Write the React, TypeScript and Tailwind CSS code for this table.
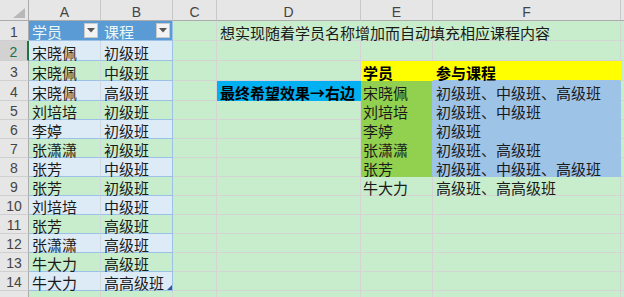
import React from "react";

const COLS = ["A", "B", "C", "D", "E", "F", ""];
const COL_W = [
  "w-[72px]",
  "w-[72px]",
  "w-[44px]",
  "w-[144px]",
  "w-[72px]",
  "w-[188px]",
  "w-[30px]",
];

const TABLE = [
  ["宋晓佩", "初级班"],
  ["宋晓佩", "中级班"],
  ["宋晓佩", "高级班"],
  ["刘培培", "初级班"],
  ["李婷", "初级班"],
  ["张潇潇", "初级班"],
  ["张芳", "中级班"],
  ["张芳", "初级班"],
  ["刘培培", "中级班"],
  ["张芳", "高级班"],
  ["张潇潇", "高级班"],
  ["牛大力", "高级班"],
  ["牛大力", "高高级班"],
];

const RESULT: Record<number, [string, string]> = {
  4: ["宋晓佩", "初级班、中级班、高级班"],
  5: ["刘培培", "初级班、中级班"],
  6: ["李婷", "初级班"],
  7: ["张潇潇", "初级班、高级班"],
  8: ["张芳", "初级班、中级班、高级班"],
  9: ["牛大力", "高级班、高高级班"],
};

const CJK = "font-['Noto_Sans_CJK_SC','Noto_Sans',sans-serif]";

function Dropdown() {
  return (
    <div className="absolute right-[2px] top-[2px] w-[14px] h-[15px] bg-[#f3f3f3] border border-[#c9c9c9] flex items-center justify-center">
      <svg width="8" height="5" viewBox="0 0 8 5">
        <path d="M0 0H8L4 4.5Z" fill="#555" />
      </svg>
    </div>
  );
}

function Cell({
  w,
  cls,
  children,
}: {
  w: string;
  cls: string;
  children?: React.ReactNode;
}) {
  return (
    <div
      className={`${w} relative shrink-0 h-full border-r border-b flex items-end whitespace-nowrap text-[15px] leading-none text-[#1a1a1a] ${CJK} ${cls}`}
    >
      {children}
    </div>
  );
}

function RowHead({ n }: { n: number }) {
  const active = n === 2;
  return (
    <div
      className={`w-[29px] shrink-0 h-full border-b border-[#cfcfcf] flex items-end justify-center pb-[1px] text-[14px] leading-none font-['Liberation_Sans',Arial,sans-serif] ${
        active
          ? "bg-[#d2d2d2] text-[#217346] border-r-2 border-r-[#217346]"
          : "bg-[#e6e6e6] text-[#444] border-r border-r-[#ababab]"
      }`}
    >
      {n <= 14 ? n : ""}
    </div>
  );
}

function Row({ r }: { r: number }) {
  const h = r <= 4 ? "h-[20px]" : "h-[19px]";
  const grid = "border-[#d4d4d4]";
  const data = r >= 2 && r <= 14 ? TABLE[r - 2] : null;
  const band = r % 2 === 0 ? "bg-[#ddebf7]" : "";
  const res = RESULT[r];

  let a: React.ReactNode;
  let b: React.ReactNode;
  if (r === 1) {
    a = (
      <Cell w={COL_W[0]} cls="bg-[#5b9bd5] border-[#5b9bd5] border-b-[#9bc2e6] text-[#eaf7f2] pl-[3px] pb-[1px]">
        学员
        <Dropdown />
      </Cell>
    );
    b = (
      <Cell w={COL_W[1]} cls="bg-[#5b9bd5] border-[#9bc2e6] text-[#eaf7f2] pl-[3px] pb-[1px]">
        课程
        <Dropdown />
      </Cell>
    );
  } else if (data) {
    a = (
      <Cell w={COL_W[0]} cls={`${band} border-r-[#d0d8e0] border-b-[#9bc2e6] pl-[3px]`}>
        {data[0]}
      </Cell>
    );
    b = (
      <Cell w={COL_W[1]} cls={`${band} border-[#9bc2e6] pl-[3px]`}>
        {data[1]}
        {r === 14 && (
          <svg className="absolute right-[0px] bottom-[0px]" width="5" height="5" viewBox="0 0 5 5">
            <path d="M5 0V5H0Z" fill="#2f5597" />
          </svg>
        )}
      </Cell>
    );
  } else {
    a = <Cell w={COL_W[0]} cls={grid} />;
    b = <Cell w={COL_W[1]} cls={grid} />;
  }

  let d: React.ReactNode = <Cell w={COL_W[3]} cls={grid} />;
  if (r === 1) {
    d = (
      <Cell w={COL_W[3]} cls="border-b-[#d4d4d4] border-r-transparent pl-[3px] z-10">
        想实现随着学员名称增加而自动填充相应课程内容
      </Cell>
    );
  } else if (r === 4) {
    d = (
      <Cell w={COL_W[3]} cls="bg-[#00b0f0] border-[#00b0f0] font-bold text-black pl-[3px]">
        最终希望效果→右边
      </Cell>
    );
  }

  let e: React.ReactNode = (
    <Cell w={COL_W[4]} cls={r === 1 ? "border-b-[#d4d4d4] border-r-transparent" : grid} />
  );
  let f: React.ReactNode = <Cell w={COL_W[5]} cls={grid} />;
  if (r === 3) {
    e = (
      <Cell w={COL_W[4]} cls="bg-[#ffff00] border-[#ffff00] font-bold text-black pl-[2px]">
        学员
      </Cell>
    );
    f = (
      <Cell w={COL_W[5]} cls="bg-[#ffff00] border-[#ffff00] border-b-[#9dc3e6] font-bold text-black pl-[3px]">
        参与课程
      </Cell>
    );
  } else if (res && r <= 8) {
    e = (
      <Cell w={COL_W[4]} cls="bg-[#92d050] border-[#92d050] border-r-[#9dc3e6] pl-[2px]">
        {res[0]}
      </Cell>
    );
    f = (
      <Cell w={COL_W[5]} cls="bg-[#9dc3e6] border-[#9dc3e6] border-b-[#9dc3e6] pl-[3px]">
        {res[1]}
      </Cell>
    );
  } else if (res) {
    e = (
      <Cell w={COL_W[4]} cls={`${grid} pl-[2px]`}>
        {res[0]}
      </Cell>
    );
    f = (
      <Cell w={COL_W[5]} cls={`${grid} pl-[3px]`}>
        {res[1]}
      </Cell>
    );
  }

  return (
    <div className={`flex ${h}`}>
      <RowHead n={r} />
      {a}
      {b}
      <Cell w={COL_W[2]} cls={grid} />
      {d}
      {e}
      {f}
      <Cell w={COL_W[6]} cls={grid} />
    </div>
  );
}

export default function App() {
  const rows = Array.from({ length: 15 }, (_, i) => i + 1);
  return (
    <div className="w-[624px] h-[297px] overflow-hidden bg-[#c7edcc] select-none">
      <div className="flex h-[21px]">
        <div className="w-[29px] shrink-0 h-full bg-[#e6e6e6] border-r border-b border-[#ababab] relative">
          <svg className="absolute right-[3px] bottom-[2px]" width="12" height="10" viewBox="0 0 12 10">
            <path d="M12 0V10H0Z" fill="#b8b8b8" />
          </svg>
        </div>
        {COLS.map((c, i) => (
          <div
            key={i}
            className={`${COL_W[i]} shrink-0 h-full bg-[#e6e6e6] border-r border-r-[#c8c8c8] border-b border-b-[#ababab] flex items-end justify-center pb-[1px] text-[14px] leading-none text-[#444] font-['Liberation_Sans',Arial,sans-serif]`}
          >
            {c}
          </div>
        ))}
      </div>
      {rows.map((r) => (
        <Row key={r} r={r} />
      ))}
    </div>
  );
}
